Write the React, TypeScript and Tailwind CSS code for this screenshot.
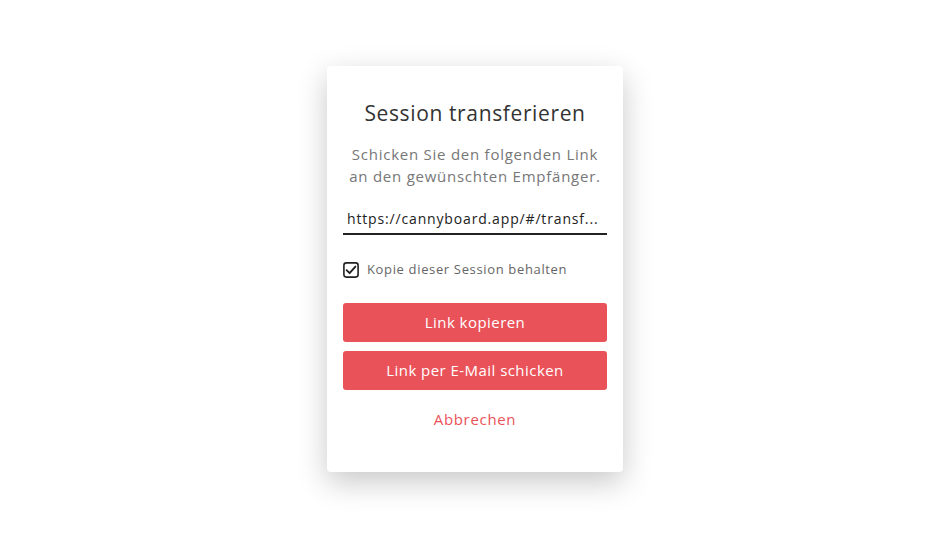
export default function App() {
  return (
    <div className="flex h-[538px] w-full items-center justify-center bg-white font-['Open_Sans','Noto_Sans',sans-serif]">
      <div className="flex w-[296px] flex-col rounded-[4px] bg-white px-4 pt-[33px] pb-[43px] shadow-[0_10px_30px_rgba(0,0,0,0.22)]">
        <h1 className="text-center text-[21px] leading-[28px] tracking-[0.03em] text-[#333]">Session transferieren</h1>
        <p className="mt-[16px] text-center text-[15px] leading-[22px] tracking-[0.05em] text-[#777]">
          Schicken Sie den folgenden Link
          <br />
          an den gewünschten Empfänger.
        </p>
        <div className="mt-4 flex h-[32px] items-center border-b-2 border-[#222] px-[4px] text-[14px] tracking-[0.06em] text-[#222]">
          <span className="truncate">https://cannyboard.app/#/transf...</span>
        </div>
        <label className="mt-[25px] flex items-center gap-2 text-[13px] tracking-[0.05em] text-[#666]">
          <svg width="16" height="16" viewBox="0 0 16 16" fill="none" className="shrink-0">
            <rect x="0.9" y="0.9" width="14.2" height="14.2" rx="2.5" stroke="#222" strokeWidth="1.6" />
            <path d="M3.6 8.2 L6.6 11.2 L12.4 4.6" stroke="#222" strokeWidth="1.9" strokeLinecap="round" strokeLinejoin="round" />
          </svg>
          Kopie dieser Session behalten
        </label>
        <button className="mt-[23px] h-[39px] rounded-[3px] bg-[#ea5259] text-[15px] tracking-[0.03em] text-white">Link kopieren</button>
        <button className="mt-[9px] h-[39px] rounded-[3px] bg-[#ea5259] text-[15px] tracking-[0.03em] text-white">Link per E-Mail schicken</button>
        <button className="mt-[19px] h-5 text-[15px] leading-5 tracking-[0.045em] text-[#ea5259]">Abbrechen</button>
      </div>
    </div>
  );
}
